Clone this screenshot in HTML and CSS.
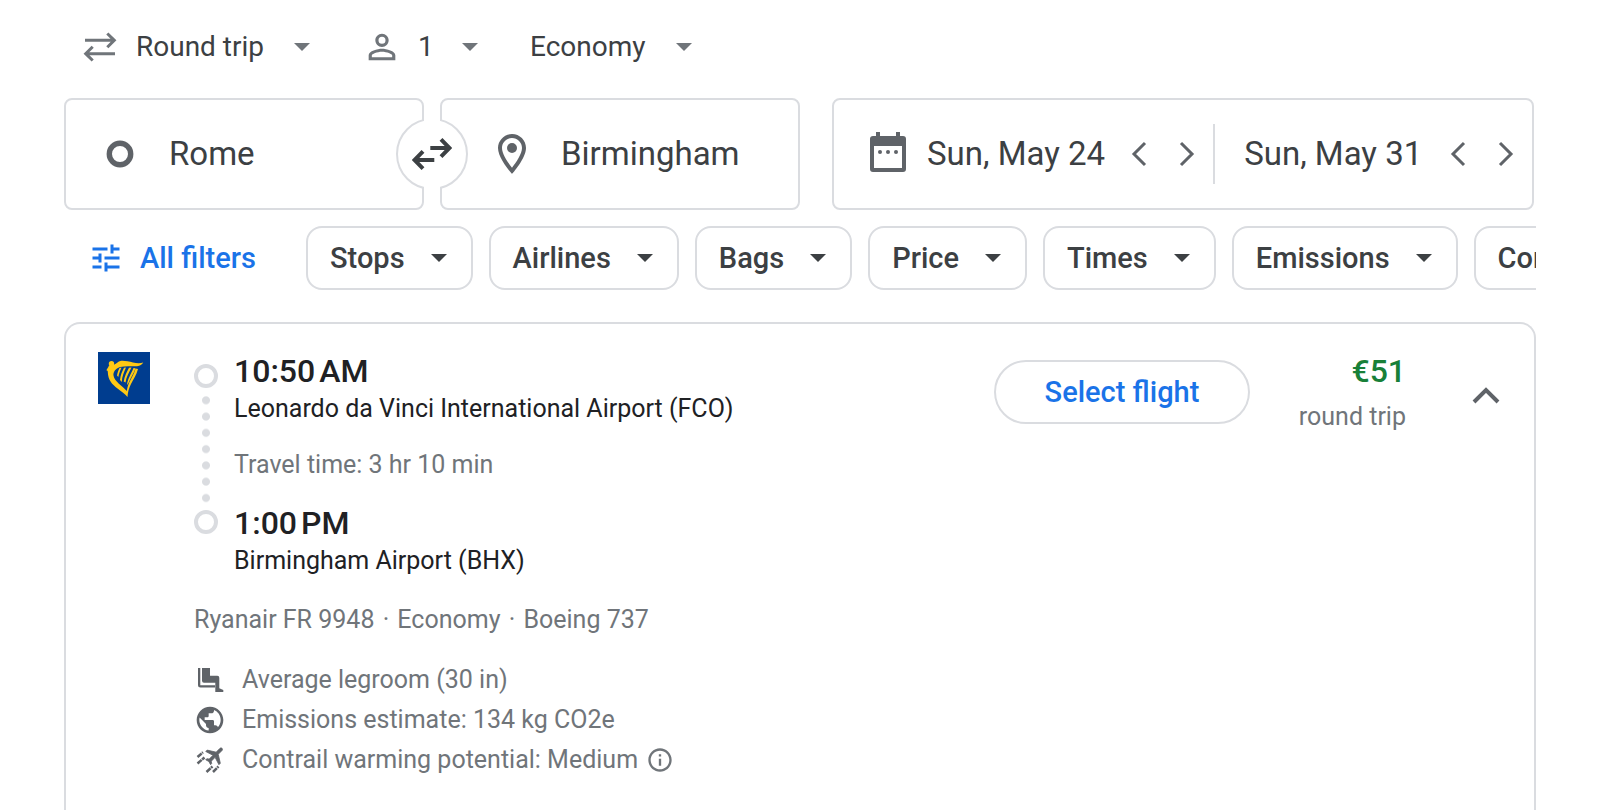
FILE: index.html
```html
<!DOCTYPE html>
<html lang="en">
<head>
<meta charset="utf-8">
<meta name="viewport" content="width=device-width, initial-scale=1">
<title>Flights: Rome to Birmingham</title>
<link rel="stylesheet" href="styles.css">
</head>
<body>
<svg class="defs" aria-hidden="true">
  <symbol id="caret" viewBox="0 0 16 8"><path d="M0 0h16L8 8z"/></symbol>
  <symbol id="prev" viewBox="0 0 48 48"><path d="M30 13 19 24l11 11" fill="none" stroke="currentColor" stroke-width="3"/></symbol>
  <symbol id="next" viewBox="0 0 48 48"><path d="m18 13 11 11-11 11" fill="none" stroke="currentColor" stroke-width="3"/></symbol>
</svg>
<main class="page">
  <form class="options">
    <div class="option trip">
      <svg class="trip-icon" viewBox="0 0 34 30" aria-hidden="true"><path d="M2 8.3h29M24.3 1.5l7 6.8-7 7M32 21.7H3M9.7 14.7l-7 7 7 6.8" fill="none" stroke="currentColor" stroke-width="3"/></svg>
      <select class="trip-select" aria-label="Trip type"><option>Round trip</option></select>
      <svg class="caret" aria-hidden="true"><use href="#caret"/></svg>
    </div>
    <div class="option people">
      <svg class="person-icon" viewBox="0 0 24 24" aria-hidden="true"><path d="M12 5.9a2.1 2.1 0 110 4.2 2.1 2.1 0 010-4.2m0 9c2.97 0 6.1 1.46 6.1 2.1v1.1H5.9V17c0-.64 3.13-2.1 6.1-2.1M12 4C9.79 4 8 5.79 8 8s1.79 4 4 4 4-1.79 4-4-1.79-4-4-4zm0 9c-2.67 0-8 1.34-8 4v3h16v-3c0-2.66-5.33-4-8-4z"/></svg>
      <select class="people-select" aria-label="Passengers"><option>1</option></select>
      <svg class="caret" aria-hidden="true"><use href="#caret"/></svg>
    </div>
    <div class="option cabin">
      <select class="cabin-select" aria-label="Cabin class"><option>Economy</option></select>
      <svg class="caret" aria-hidden="true"><use href="#caret"/></svg>
    </div>
  </form>

  <form class="search">
    <div class="places">
      <label class="field place">
        <svg class="field-icon" viewBox="0 0 48 48" aria-hidden="true"><circle cx="24" cy="24" r="10.700" fill="none" stroke="currentColor" stroke-width="5.400"/></svg>
        <input type="text" value="Rome" aria-label="Where from?">
      </label>
      <label class="field place">
        <svg class="field-icon" viewBox="0 0 24 24" aria-hidden="true"><path d="M12 2C8.130 2 5 5.130 5 9c0 5.250 7 13 7 13s7-7.750 7-13c0-3.870-3.130-7-7-7zM7 9c0-2.760 2.240-5 5-5s5 2.240 5 5c0 2.880-2.880 7.190-5 9.880C9.920 16.210 7 11.850 7 9z"/><circle cx="12" cy="9" r="2.500"/></svg>
        <input type="text" value="Birmingham" aria-label="Where to?">
      </label>
      <button class="swap" type="button" aria-label="Swap origin and destination">
        <svg viewBox="0 0 40 32" aria-hidden="true"><path d="M18.300 10H36M29 1.400 37.500 10 29 18.600M22.300 22H4M11 13.400 2.500 22l8.500 8.600" fill="none" stroke="currentColor" stroke-width="4"/></svg>
      </button>
    </div>
    <div class="field dates">
      <div class="date depart">
        <svg class="field-icon" viewBox="0 0 24 24" aria-hidden="true"><path fill-rule="evenodd" d="M6 1h2v2h8V1h2v2h1.500A1.500 1.500 0 0121 4.500v15a1.500 1.500 0 01-1.500 1.500h-15A1.500 1.500 0 013 19.500v-15A1.500 1.500 0 014.500 3H6zM5 8v11h14V8z"/><circle cx="8" cy="11" r="1"/><circle cx="12" cy="11" r="1"/><circle cx="16" cy="11" r="1"/></svg>
        <input type="text" value="Sun, May 24" aria-label="Departure">
        <button class="step" type="button" aria-label="Previous departure day"><svg aria-hidden="true"><use href="#prev"/></svg></button>
        <button class="step" type="button" aria-label="Next departure day"><svg aria-hidden="true"><use href="#next"/></svg></button>
      </div>
      <div class="date return">
        <input type="text" value="Sun, May 31" aria-label="Return">
        <button class="step" type="button" aria-label="Previous return day"><svg aria-hidden="true"><use href="#prev"/></svg></button>
        <button class="step" type="button" aria-label="Next return day"><svg aria-hidden="true"><use href="#next"/></svg></button>
      </div>
    </div>
  </form>

  <div class="filters">
    <button class="all-filters" type="button">
      <svg viewBox="0 0 24 24" aria-hidden="true"><path d="M3 17v2h6v-2H3zM3 5v2h10V5H3zm10 16v-2h8v-2h-8v-2h-2v6h2zM7 9v2H3v2h4v2h2V9H7zm14 4v-2H11v2h10zm-6-4h2V7h4V5h-4V3h-2v6z"/></svg>
      All filters
    </button>
    <button class="chip" type="button">Stops <svg class="caret" aria-hidden="true"><use href="#caret"/></svg></button>
    <button class="chip" type="button">Airlines <svg class="caret" aria-hidden="true"><use href="#caret"/></svg></button>
    <button class="chip" type="button">Bags <svg class="caret" aria-hidden="true"><use href="#caret"/></svg></button>
    <button class="chip" type="button">Price <svg class="caret" aria-hidden="true"><use href="#caret"/></svg></button>
    <button class="chip" type="button">Times <svg class="caret" aria-hidden="true"><use href="#caret"/></svg></button>
    <button class="chip" type="button">Emissions <svg class="caret" aria-hidden="true"><use href="#caret"/></svg></button>
    <button class="chip" type="button">Connecting airports <svg class="caret" aria-hidden="true"><use href="#caret"/></svg></button>
  </div>

  <article class="card">
    <svg class="logo" viewBox="0 0 52 52" role="img" aria-label="Ryanair">
      <path fill="#003d8f" d="M0 0h52v52H0z"/>
      <g fill="#ffc914">
        <circle cx="13.500" cy="11.700" r="2.700"/>
        <path d="M11 13.500C10 16 8.500 17 8.500 18.500c1 0 1.300.5 1.300 1.500.2 8 4.500 12.500 9.700 16.500 4 3 7.500 5.500 10 8.500.2-4.500 1.500-9 3.500-13 2.300-4.700 5.500-9 7-15l-2.500-.5c-1.500 6-4.500 10-6.500 14.500-1.200 2.700-1.800 5.300-2.200 8-5-5.500-12.300-9.500-13.300-15.500-.5-3.500 2-7 6.500-8.500 6-1.500 12-.5 17-.8 3-.4 5.300-1.700 6.300-3.700-3.300 1-6.800.7-10.300 0-4.500-1-9-2-12.500-1.500-2.500.500-3.500 2.500-6 3.500z"/>
        <path d="m21.500 16 2-.5c-1.500 3.500-2.500 6-3.200 9.500l-1.300-1.500c.5-3 1.300-5 2.500-7.500zM26 15.800l2-.3c-2 5-4 9-4.200 14.500L22 28c.5-5 2.200-8.500 4-12.200zM31 15.800l2.500-.3c-2.500 5-5.500 10-6 15l-1.800-1c.8-5 3-9.500 5.300-13.700zM35.500 16l2 .2C36 21 32.500 26 30.500 31L29 33c.5-6 4.500-12 6.500-17z"/>
      </g>
    </svg>
    <div class="details">
      <div class="legs">
        <div class="timeline" aria-hidden="true"><span class="stop"></span><span class="dots"></span><span class="stop"></span></div>
        <div class="leg-text">
          <p class="time">10:50&#8239;AM</p>
          <p class="airport">Leonardo da Vinci International Airport (FCO)</p>
          <p class="duration">Travel time: 3 hr 10 min</p>
          <p class="time">1:00&#8239;PM</p>
          <p class="airport">Birmingham Airport (BHX)</p>
        </div>
      </div>
      <p class="plane">Ryanair FR 9948 <span class="sep">·</span> Economy <span class="sep">·</span> Boeing 737</p>
      <ul class="facts">
        <li>
          <svg viewBox="0 0 32 32" aria-hidden="true"><path d="M4 4h2.300v17.200H21v2.300H6.500Q4 23.500 4 21zM8 4H16v7.700h7.300q2 0 2 2v10.600l4 1.700v2h-8v-9.300H10q-2 0-2-2z"/></svg>
          Average legroom (30 in)
        </li>
        <li>
          <svg viewBox="0 0 24 24" aria-hidden="true"><path d="M12 2C6.480 2 2 6.480 2 12s4.480 10 10 10 10-4.480 10-10S17.520 2 12 2zm-1 17.930c-3.950-.49-7-3.850-7-7.930 0-.62.080-1.210.21-1.790L9 15v1c0 1.100.9 2 2 2v1.930zm6.900-2.540c-.26-.81-1-1.390-1.900-1.390h-1v-3c0-.55-.45-1-1-1H8v-2h2c.55 0 1-.45 1-1V7h2c1.100 0 2-.9 2-2v-.41c2.930 1.190 5 4.060 5 7.410 0 2.080-.8 3.970-2.100 5.390z"/></svg>
          Emissions estimate: 134 kg CO2e
        </li>
        <li>
          <svg viewBox="0 0 32 32" aria-hidden="true"><path transform="translate(21.800 10.600) rotate(45) scale(.98) translate(-11.500 -11)" d="M21 16v-2l-8-5V3.500c0-.83-.67-1.500-1.500-1.500S10 2.670 10 3.500V9l-8 5v2l8-2.500V19l-2 1.500V22l3.500-1 3.500 1v-1.500L13 19v-5.500l8 2.500z" stroke="currentColor" stroke-width=".8"/><path d="M3.500 13 9 8.300M3.500 19.500l7-6M12.500 28l6-5.500M19 28l5.500-5.500" fill="none" stroke="currentColor" stroke-width="2.500" stroke-dasharray="5.500 .6"/></svg>
          Contrail warming potential: Medium
          <button class="info" type="button" aria-label="About contrails"><svg viewBox="0 0 24 24" aria-hidden="true"><path d="M11 7h2v2h-2zm0 4h2v6h-2zm1-9C6.480 2 2 6.480 2 12s4.480 10 10 10 10-4.480 10-10S17.520 2 12 2zm0 18c-4.410 0-8-3.590-8-8s3.590-8 8-8 8 3.590 8 8-3.590 8-8 8z"/></svg></button>
        </li>
      </ul>
    </div>
    <button class="select-flight" type="button">Select flight</button>
    <div class="fare">
      <p class="price">€51</p>
      <p class="fare-type">round trip</p>
    </div>
    <button class="collapse" type="button" aria-label="Collapse flight details"><svg viewBox="0 0 48 48" aria-hidden="true"><path d="m12 31 12-12 12 12" fill="none" stroke="currentColor" stroke-width="4"/></svg></button>
  </article>
</main>
</body>
</html>
```
FILE: styles.css
```css
:root {
  --line: #dadce0;
  --ink: #202124;
  --text: #3c4043;
  --muted: #70757a;
  --icon: #5f6368;
  --blue: #1a73e8;
  --body: Roboto, "Liberation Sans", sans-serif;
  --display: "Google Sans", Roboto, "Liberation Sans", sans-serif;
}

* { box-sizing: border-box; }

body {
  margin: 0;
  background: #fff;
  color: var(--text);
  font-family: var(--body);
}

p, ul { margin: 0; padding: 0; }

svg { display: block; flex: none; fill: currentColor; }

.defs { width: 0; height: 0; position: absolute; }

button, input, select {
  margin: 0;
  padding: 0;
  border: 0;
  background: none;
  color: inherit;
  font: inherit;
}

button { cursor: pointer; }

.page {
  display: flex;
  flex-direction: column;
  min-height: 100vh;
  padding: 16px 64px 0;
}

/* Trip options */
.options {
  display: flex;
  align-items: center;
  height: 61px;
  margin-bottom: 21px;
  padding-left: 19px;
  font-size: 28px;
}

.option { display: flex; align-items: center; color: var(--muted); }
.option select { appearance: none; color: var(--text); line-height: 40px; }
.caret { width: 16px; height: 8px; }
.trip-icon { width: 34px; height: 30px; margin-right: 19px; }
.trip-select { width: 158px; }
.people { margin-left: 52px; }
.person-icon { width: 40px; height: 40px; margin-right: 16px; }
.people-select { width: 44px; }
.cabin { margin-left: 52px; }
.cabin-select { width: 146px; }

/* Search fields */
.search {
  display: grid;
  grid-template-columns: 368fr 351fr;
  gap: 32px;
  padding-right: 2px;
  font-size: 33px;
}

.places {
  position: relative;
  display: grid;
  grid-template-columns: 1fr 1fr;
  gap: 16px;
}

.field {
  display: flex;
  align-items: center;
  min-width: 0;
  height: 112px;
  border: 2px solid var(--line);
  border-radius: 8px;
}

.field input { flex: 1; min-width: 0; width: 0; height: 44px; padding-bottom: 2px; outline: 0; }
.field-icon { width: 48px; height: 48px; color: var(--icon); }
.place { gap: 25px; padding: 0 40px 0 30px; }
.place + .place { padding-left: 46px; }

.swap {
  position: absolute;
  top: 50%;
  left: 50%;
  display: grid;
  place-items: center;
  width: 72px;
  height: 72px;
  border: 2px solid var(--line);
  border-radius: 50%;
  background: #fff;
  transform: translate(-50%, -50%);
}

.swap::before {
  content: "";
  position: absolute;
  inset: -2px 26px;
  background: #fff;
}

.swap svg { position: relative; width: 40px; height: 32px; }

.date { display: flex; align-items: center; min-width: 0; height: 60px; }
.depart { flex: 385; padding: 0 2px 0 30px; border-right: 2px solid var(--line); }
.depart .field-icon { margin-right: 15px; }
.return { flex: 317; padding: 0 2px 0 29px; }
.step { width: 48px; height: 48px; color: var(--icon); }
.step svg { width: 48px; height: 48px; }

/* Filter chips */
.filters {
  display: flex;
  gap: 16px;
  margin: 16px 0 32px;
  overflow: hidden;
  color: var(--text);
  font: 500 29px/36px var(--display);
}

.all-filters {
  display: flex;
  flex: none;
  align-items: center;
  gap: 16px;
  width: 226px;
  padding-left: 24px;
  color: var(--blue);
}

.all-filters svg { width: 36px; height: 36px; }

.chip {
  display: flex;
  flex: none;
  align-items: center;
  gap: 26px;
  height: 64px;
  padding: 0 24px 0 22px;
  border: 2px solid var(--line);
  border-radius: 16px;
  white-space: nowrap;
}

/* Flight card */
.card {
  display: flex;
  flex: 1;
  align-items: flex-start;
  padding: 28px 24px 32px 32px;
  border: 2px solid var(--line);
  border-bottom: 0;
  border-radius: 16px 16px 0 0;
}

.logo { width: 52px; height: 52px; }

.details {
  flex: 1;
  min-width: 0;
  margin-left: 44px;
  color: var(--muted);
  font-size: 25px;
  line-height: 32px;
}

.legs { display: flex; gap: 16px; }
.timeline { display: flex; flex-direction: column; width: 24px; padding-top: 12px; }
.stop { width: 24px; height: 24px; border: 4px solid var(--line); border-radius: 50%; }

.dots {
  height: 114px;
  margin: 4px 0;
  background: radial-gradient(circle, var(--line) 3.5px, transparent 4.5px) center / 24px 16px repeat-y;
  background-repeat: no-repeat round;
}

.time { margin-bottom: 3px; color: var(--ink); font: 500 32px/38px var(--display); }
.airport { color: var(--ink); }
.duration { margin: 24px 0 23px; }
.plane { margin-top: 27px; }
.sep { margin: 0 2px; }
.facts { display: grid; gap: 8px; margin-top: 28px; list-style: none; }
.facts li { display: flex; align-items: center; }
.facts svg { width: 32px; height: 32px; margin-right: 16px; color: var(--icon); }
.facts .info svg { width: 28px; height: 28px; margin: 0 0 0 8px; color: var(--muted); }

.select-flight {
  flex: none;
  width: 256px;
  height: 64px;
  margin-top: 8px;
  border: 2px solid var(--line);
  border-radius: 32px;
  color: var(--blue);
  font: 500 29px/36px var(--display);
}

.fare { width: 156px; text-align: right; }
.price { color: #188038; font: 500 32px/38px var(--display); }
.fare-type { margin-top: 11px; color: var(--muted); font-size: 25px; line-height: 32px; }
.collapse { margin: 19px 0 0 56px; color: var(--icon); }
.collapse svg { width: 48px; height: 48px; }
```
